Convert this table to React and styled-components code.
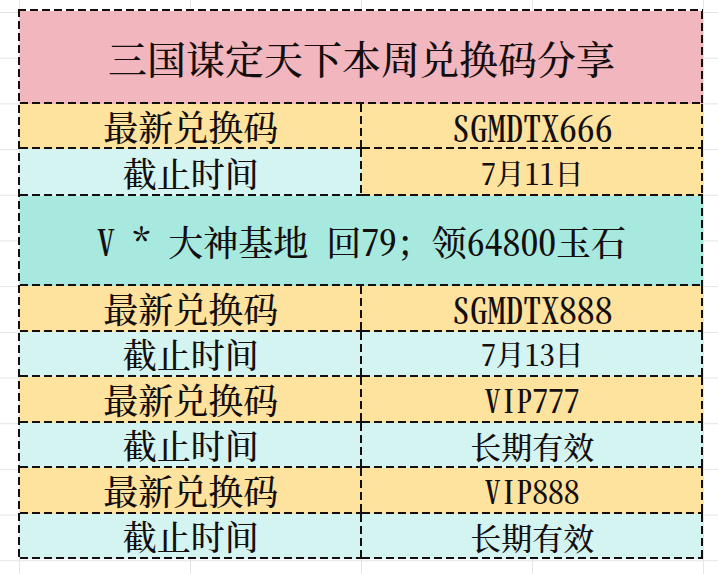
import React from 'react';
import styled, { createGlobalStyle, css } from 'styled-components';

const GlobalStyle = createGlobalStyle`
  html, body {
    margin: 0;
    padding: 0;
    background: #ffffff;
  }
`;

const ink = '#140e0e';

// dashed lines drawn as backgrounds: 8px dash, 4px gap
const dashedEdges = css`
  background-image:
    repeating-linear-gradient(90deg, ${ink} 0 8px, transparent 8px 12px),
    repeating-linear-gradient(180deg, ${ink} 0 8px, transparent 8px 12px);
  background-size: 100% 2px, 2px 100%;
  background-position: left bottom, right top;
  background-repeat: no-repeat;
`;

const Sheet = styled.div`
  width: 718px;
  height: 574px;
  box-sizing: border-box;
  padding: 9px 0 0 18px;
  background-color: #fff;
  background-image:
    linear-gradient(#e4e4e4 1px, transparent 1px),
    linear-gradient(90deg, #e4e4e4 1px, transparent 1px);
  background-size: 171px 45.7px;
  background-position: 19px 12px;
  overflow: hidden;
`;

const Table = styled.div`
  width: 685px;
  display: grid;
  grid-template-columns: 1fr 1fr;
  padding: 2px 0 0 2px;
  box-sizing: border-box;
  background-image:
    repeating-linear-gradient(90deg, ${ink} 0 8px, transparent 8px 12px),
    repeating-linear-gradient(180deg, ${ink} 0 8px, transparent 8px 12px);
  background-size: 100% 2px, 2px 100%;
  background-position: left top, left top;
  background-repeat: no-repeat;
  color: ${ink};
  font-family: "Noto Serif CJK SC", "Noto Sans CJK SC", serif;
  font-weight: 500;
`;

const Cell = styled.div`
  box-sizing: border-box;
  height: ${(p) => p.$h || 45.5}px;
  grid-column: ${(p) => (p.$wide ? '1 / span 2' : 'auto')};
  display: flex;
  align-items: center;
  justify-content: center;
  font-size: ${(p) => p.$size || 35}px;
  line-height: 1;
  background-color: ${(p) => p.$bg};
  ${dashedEdges}
`;

const Line = styled.span`
  white-space: pre;
`;

// half-width Latin, like the sheet's Song typeface
const Latin = styled.span`
  font-family: "Noto Serif CJK SC", "Noto Serif CJK JP", serif;
  font-feature-settings: "hwid" 1;
  font-size: 1.02em;
`;

const PINK = '#f2b6be';
const YELLOW = '#fde39e';
const ICE = '#d3f4f1';
const AQUA = '#a7e8df';

const rows = [
  { label: '最新兑换码', value: <Latin>SGMDTX888</Latin>, size: 35, lbg: YELLOW, rbg: YELLOW },
  { label: '截止时间', value: <><Latin>7</Latin>月<Latin>13</Latin>日</>, size: 29, lbg: ICE, rbg: ICE },
  { label: '最新兑换码', value: <Latin>VIP777</Latin>, size: 31, lbg: YELLOW, rbg: YELLOW },
  { label: '截止时间', value: '长期有效', size: 31, lbg: ICE, rbg: ICE },
  { label: '最新兑换码', value: <Latin>VIP888</Latin>, size: 31, lbg: YELLOW, rbg: YELLOW },
  { label: '截止时间', value: '长期有效', size: 31, lbg: ICE, rbg: ICE },
];

export default function App() {
  return (
    <>
      <GlobalStyle />
      <Sheet>
        <Table>
          <Cell $wide $h={93} $size={39} $bg={PINK}>
            <Line>三国谋定天下本周兑换码分享</Line>
          </Cell>

          <Cell $h={45} $bg={YELLOW}><Line>最新兑换码</Line></Cell>
          <Cell $h={45} $bg={YELLOW}><Line><Latin>SGMDTX666</Latin></Line></Cell>
          <Cell $h={47} $bg={ICE} $size={34}><Line>截止时间</Line></Cell>
          <Cell $h={47} $bg={YELLOW} $size={29}>
            <Line><Latin>7</Latin>月<Latin>11</Latin>日</Line>
          </Cell>

          <Cell $wide $h={90} $bg={AQUA}>
            <Line><Latin>V * </Latin>大神基地<Latin> </Latin>回<Latin>79</Latin>；领<Latin>64800</Latin>玉石</Line>
          </Cell>

          {rows.map((r, i) => (
            <React.Fragment key={i}>
              <Cell $bg={r.lbg} $size={r.label.length === 4 ? 34 : 35}>
                <Line>{r.label}</Line>
              </Cell>
              <Cell $bg={r.rbg} $size={r.size}>
                <Line>{r.value}</Line>
              </Cell>
            </React.Fragment>
          ))}
        </Table>
      </Sheet>
    </>
  );
}
